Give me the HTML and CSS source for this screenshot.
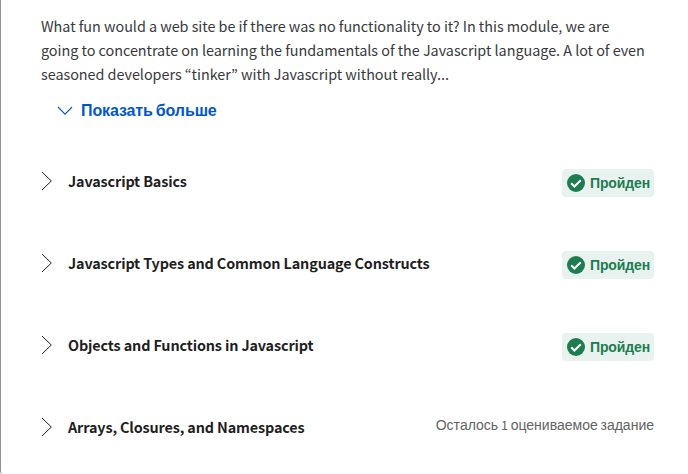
FILE: index.html
```html
<!DOCTYPE html>
<html lang="ru">
<head>
<meta charset="utf-8">
<title>Javascript</title>
<link rel="stylesheet" href="styles.css">
</head>
<body>
<svg class="defs" width="0" height="0">
  <symbol id="chevron" viewBox="0 0 12 20"><path d="M1 1l9.3 9L1 19" fill="none" stroke="#1f1f1f" stroke-width="1"/></symbol>
  <symbol id="check" viewBox="0 0 18 18"><circle cx="9" cy="9" r="9" fill="#1d7c50"/><path d="M4.2 9.3l3.2 3.2 6.4-6.2" fill="none" stroke="#fff" stroke-width="2"/></symbol>
</svg>
<main class="card">
  <p class="description"><span class="line">What fun would a web site be if there was no functionality to it? In this module, we are</span> <span class="line">going to concentrate on learning the fundamentals of the Javascript language. A lot of even</span> <span class="line">seasoned developers “tinker” with Javascript without really...</span></p>
  <button class="more" type="button">
    <svg width="16" height="10" viewBox="0 0 16 10"><path d="M1 1l7 7.2L15 1" fill="none" stroke="#0056d2" stroke-width="1.1"/></svg>
    <span>Показать больше</span>
  </button>
  <ul class="lessons">
    <li class="lesson">
      <svg class="chevron"><use href="#chevron"/></svg>
      <h3 class="title">Javascript Basics</h3>
      <span class="badge"><svg class="check"><use href="#check"/></svg><span>Пройден</span></span>
    </li>
    <li class="lesson">
      <svg class="chevron"><use href="#chevron"/></svg>
      <h3 class="title">Javascript Types and Common Language Constructs</h3>
      <span class="badge"><svg class="check"><use href="#check"/></svg><span>Пройден</span></span>
    </li>
    <li class="lesson">
      <svg class="chevron"><use href="#chevron"/></svg>
      <h3 class="title">Objects and Functions in Javascript</h3>
      <span class="badge"><svg class="check"><use href="#check"/></svg><span>Пройден</span></span>
    </li>
    <li class="lesson">
      <svg class="chevron"><use href="#chevron"/></svg>
      <h3 class="title">Arrays, Closures, and Namespaces</h3>
      <span class="remaining">Осталось <span class="count">1</span> оцениваемое задание</span>
    </li>
  </ul>
</main>
</body>
</html>
```
FILE: styles.css
```css
* { box-sizing: border-box; }
body { margin: 0; background: #fff; overflow: hidden; }
.defs { display: block; }
.card {
  height: 474px;
  padding: 14px 34px 0 40px;
  border-left: 1px solid #8e9199;
  border-bottom-left-radius: 3px;
  font-family: "Noto Sans CJK KR", sans-serif;
}
.description { margin: 0; font-size: 14.4px; line-height: 24px; letter-spacing: -0.035px; color: #373a3c; }
.line { display: block; white-space: nowrap; }
.more {
  display: flex;
  align-items: center;
  gap: 8px;
  height: 24px;
  margin: 13px 0 0 16px;
  padding: 0;
  border: 0;
  background: none;
  color: #0056d2;
  font: bold 16px/24px "Liberation Sans", sans-serif;
  letter-spacing: -0.12px;
  word-spacing: -1.2px;
  white-space: nowrap;
}
.lessons { margin: 17px 0 0; padding: 0; list-style: none; }
.lesson { display: flex; align-items: center; height: 82px; }
.chevron { width: 12px; height: 20px; margin: 0 15px 0 0; flex: none; }
.title { margin: 0; font-size: 14.4px; line-height: 24px; letter-spacing: -0.14px; font-weight: 700; color: #1f1f1f; white-space: nowrap; }
.badge {
  display: flex;
  align-items: center;
  gap: 5px;
  width: 92px;
  height: 28px;
  margin: 4px 0 0 auto;
  padding-left: 5px;
  border-radius: 4px;
  background: #e8f2ee;
  color: #1d7c50;
  font: bold 14px/20px "Liberation Sans", sans-serif;
  letter-spacing: -0.12px;
}
.check { width: 18px; height: 18px; flex: none; }
.remaining {
  margin: 0 0 4px auto;
  color: #636363;
  font: 14px/20px "Liberation Sans", sans-serif;
  word-spacing: -1.1px;
  white-space: nowrap;
}
.count { font-family: "Noto Sans CJK KR", sans-serif; font-size: 12.6px; line-height: 1; }
```
